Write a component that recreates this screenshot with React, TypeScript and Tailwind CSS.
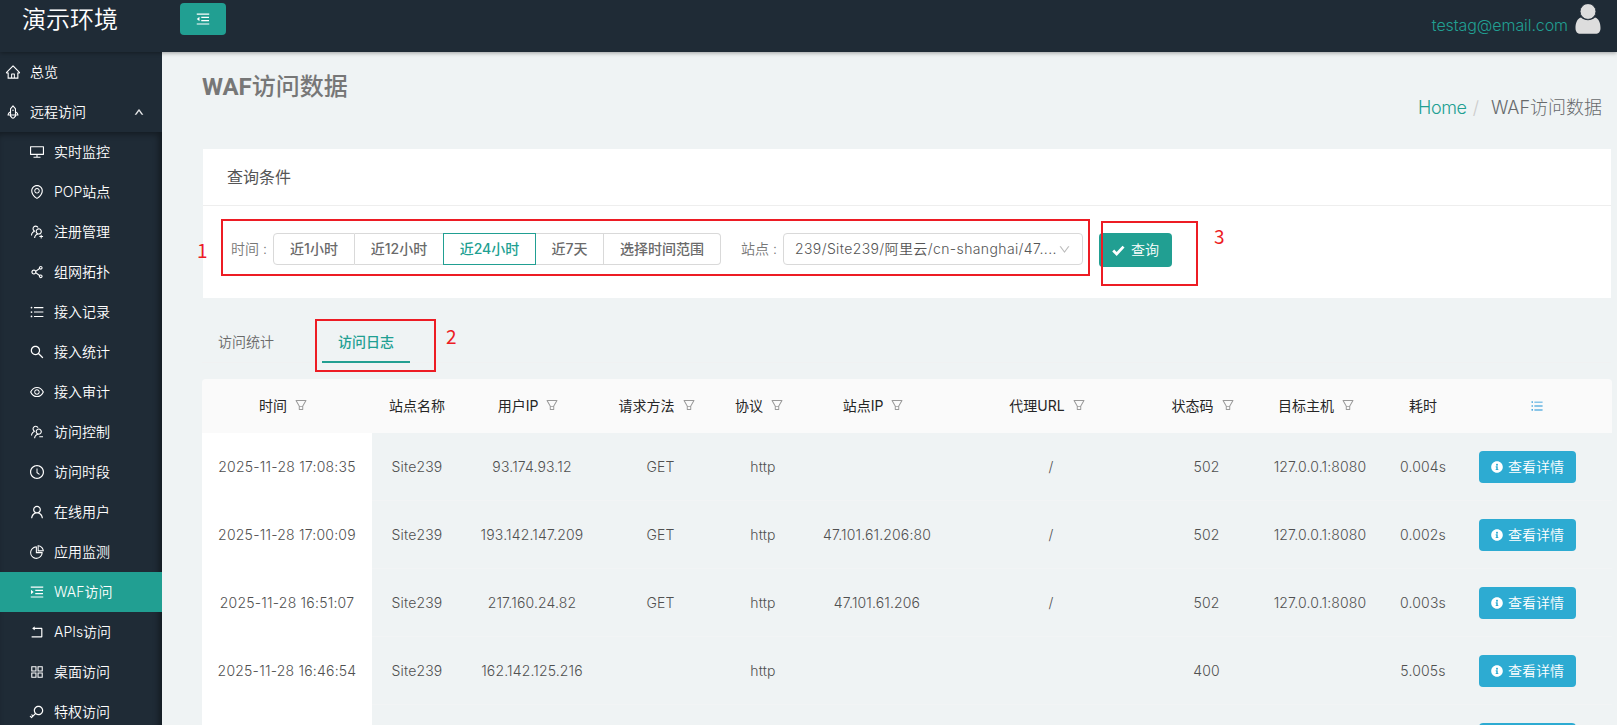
import type { ComponentType, ReactNode } from "react";
import {
  AiOutlineAppstore,
  AiOutlineClockCircle,
  AiOutlineDesktop,
  AiOutlineDown,
  AiOutlineEnvironment,
  AiOutlineEye,
  AiOutlineFilter,
  AiOutlineHome,
  AiOutlineKey,
  AiOutlineMenuFold,
  AiOutlineMenuUnfold,
  AiOutlinePieChart,
  AiOutlineRocket,
  AiOutlineRollback,
  AiOutlineSearch,
  AiOutlineShareAlt,
  AiOutlineUnorderedList,
  AiOutlineUp,
  AiOutlineUser,
  AiOutlineUsergroupAdd,
  AiOutlineUsergroupDelete,
} from "react-icons/ai";
import { FaInfoCircle } from "react-icons/fa";

type Icon = ComponentType<{ className?: string }>;

const submenu: { label: string; icon: Icon; active?: boolean }[] = [
  { label: "实时监控", icon: AiOutlineDesktop },
  { label: "POP站点", icon: AiOutlineEnvironment },
  { label: "注册管理", icon: AiOutlineUsergroupAdd },
  { label: "组网拓扑", icon: AiOutlineShareAlt },
  { label: "接入记录", icon: AiOutlineUnorderedList },
  { label: "接入统计", icon: AiOutlineSearch },
  { label: "接入审计", icon: AiOutlineEye },
  { label: "访问控制", icon: AiOutlineUsergroupDelete },
  { label: "访问时段", icon: AiOutlineClockCircle },
  { label: "在线用户", icon: AiOutlineUser },
  { label: "应用监测", icon: AiOutlinePieChart },
  { label: "WAF访问", icon: AiOutlineMenuUnfold, active: true },
  { label: "APIs访问", icon: AiOutlineRollback },
  { label: "桌面访问", icon: AiOutlineAppstore },
  { label: "特权访问", icon: AiOutlineKey },
];

const headers: { label: string; filter?: boolean }[] = [
  { label: "时间", filter: true },
  { label: "站点名称" },
  { label: "用户IP", filter: true },
  { label: "请求方法", filter: true },
  { label: "协议", filter: true },
  { label: "站点IP", filter: true },
  { label: "代理URL", filter: true },
  { label: "状态码", filter: true },
  { label: "目标主机", filter: true },
  { label: "耗时" },
];

const rows: string[][] = [
  ["2025-11-28 17:08:35", "Site239", "93.174.93.12", "GET", "http", "", "/", "502", "127.0.0.1:8080", "0.004s"],
  ["2025-11-28 17:00:09", "Site239", "193.142.147.209", "GET", "http", "47.101.61.206:80", "/", "502", "127.0.0.1:8080", "0.002s"],
  ["2025-11-28 16:51:07", "Site239", "217.160.24.82", "GET", "http", "47.101.61.206", "/", "502", "127.0.0.1:8080", "0.003s"],
  ["2025-11-28 16:46:54", "Site239", "162.142.125.216", "", "http", "", "", "400", "", "5.005s"],
  ["", "", "", "", "", "", "", "", "", ""],
];

const columns = "grid grid-cols-[170px_90px_140px_117px_88px_140px_208px_103px_124px_82px_148px]";

function Topbar() {
  return (
    <header className="relative z-20 flex h-[52px] shrink-0 bg-[#1f2b36] shadow-[0_1px_4px_rgba(0,0,0,0.35)]">
      <div className="w-[180px] pl-[22px] pt-[2px] text-[24px] leading-9 font-[350] text-white">演示环境</div>
      <button className="mt-[3px] flex h-8 w-[46px] items-center justify-center rounded-sm bg-[#219f92] text-white">
        <AiOutlineMenuFold className="size-4" />
      </button>
      <div className="ml-auto flex pr-[16px]">
        <span className="mt-[12px] mr-[7px] text-[16px] leading-[26px] font-light tracking-[-0.08px] text-[#219f92]">testag@email.com</span>
        <svg viewBox="0 0 26 30" className="mt-1 h-[30px] w-[26px]" fill="#dddddd">
          <path d="M6 13.500C2 14.500 0.500 19.500 0.500 24C0.500 28 2.500 29.800 5.500 29.800H20.500C23.500 29.800 25.500 28 25.500 24C25.500 19.500 24 14.500 20 13.500C16 17 10 17 6 13.500Z" />
          <circle cx="13" cy="7.500" r="7.900" stroke="#1f2b36" strokeWidth="0.800" />
        </svg>
      </div>
    </header>
  );
}

function Sidebar() {
  return (
    <nav className="w-[162px] shrink-0 overflow-hidden bg-[#1f2b36] text-[14px] font-[350] text-white">
      <div className="flex h-10 items-center pb-px pl-[5px]">
        <AiOutlineHome className="mt-px size-4" />
        <span className="ml-[9px]">总览</span>
      </div>
      <div className="flex h-10 items-center pb-px pl-[5px]">
        <AiOutlineRocket className="mt-px size-4" />
        <span className="ml-[9px]">远程访问</span>
        <AiOutlineUp className="mr-[18px] ml-auto size-[10px]" strokeWidth={60} />
      </div>
      <div className="shadow-[inset_-3px_2px_6px_rgba(0,0,0,0.4)]">
        {submenu.map(({ label, icon: ItemIcon, active }) => (
          <div key={label} className={active ? "flex h-10 items-center bg-[#219f92] pb-px pl-[29px]" : "flex h-10 items-center pb-px pl-[29px]"}>
            <ItemIcon className="mt-px size-4" />
            <span className="ml-[9px] whitespace-nowrap">{label}</span>
          </div>
        ))}
      </div>
    </nav>
  );
}

function Segment({ width, children }: { width: string; children: ReactNode }) {
  return <div className={`${width} flex items-center justify-center border-y border-r border-[#d9d9d9] pb-[2px]`}>{children}</div>;
}

function QueryPanel() {
  return (
    <section className="relative h-[149px] w-[1408px] bg-white">
      <h2 className="flex h-[57px] items-center border-b border-[#eeeeee] pl-[24px] text-[16px] text-[#555]">查询条件</h2>
      <div className="flex pt-[27px] pl-[28px] text-[14px]">
        <span className="w-[42px] leading-[31px] font-[350] whitespace-nowrap text-[#777]">时间 :</span>
        <div className="flex h-8 font-medium whitespace-nowrap text-[#6a6a6a]">
          <div className="flex w-[82px] items-center justify-center rounded-l-sm border border-[#d9d9d9] pb-[2px]">近1小时</div>
          <Segment width="w-[89px]">近12小时</Segment>
          <div className="-ml-px flex w-[93px] items-center justify-center border border-[#219f92] pb-[2px] text-[#219f92]">近24小时</div>
          <Segment width="w-[68px]">近7天</Segment>
          <div className="flex w-[117px] items-center justify-center rounded-r-sm border-y border-r border-[#d9d9d9] pb-[2px]">选择时间范围</div>
        </div>
        <span className="ml-[20px] w-[42px] leading-[31px] font-[350] whitespace-nowrap text-[#777]">站点 :</span>
        <div className="flex h-8 w-[300px] items-center rounded-sm border border-[#d9d9d9] pl-[11px] text-[#555]">
          <span className="w-[263px] pb-[2px] font-[350] tracking-[0.38px] whitespace-nowrap">239/Site239/阿里云/cn-shanghai/47....</span>
          <AiOutlineDown className="size-[13px] text-[#bbb]" />
        </div>
        <button className="ml-[16px] flex h-[34px] w-[73px] items-center rounded bg-[#219f92] pl-[13px] text-white">
          <svg viewBox="0 0 14 12" className="h-[11px] w-[13px]" fill="none" stroke="currentColor" strokeWidth="3">
            <path d="M1.200 6L5 9.800L12.500 1.800" />
          </svg>
          <span className="ml-[6px] pb-[2px] text-[14px] font-[350] whitespace-nowrap">查询</span>
        </button>
      </div>
      <div className="absolute top-[70px] left-[18px] h-[57px] w-[869px] border-2 border-[#ed1c24]" />
      <div className="absolute top-[72px] left-[898px] h-[65px] w-[97px] border-2 border-[#ed1c24]" />
      <span className="absolute top-[87px] -left-[6px] font-['Noto_Sans_CJK_SC',sans-serif] text-[19px] leading-7 text-[#ed1c24]">1</span>
      <span className="absolute top-[73px] left-[1011px] font-['Noto_Sans_CJK_SC',sans-serif] text-[19px] leading-7 text-[#ed1c24]">3</span>
    </section>
  );
}

function Tabs() {
  return (
    <div className="relative flex h-[44px] w-[1409px] border-b border-[#f0f1f2] text-[14px] leading-[45px]">
      <span className="w-[88px] pl-4 font-[350] text-[#6a6a6a]">访问统计</span>
      <span className="-mb-px ml-8 h-[44px] w-[88px] border-b-2 border-[#219f92] text-center font-medium text-[#219f92]">访问日志</span>
      <div className="absolute top-0 left-[113px] h-[53px] w-[121px] border-2 border-[#ed1c24]" />
      <span className="absolute top-[3px] left-[244px] font-['Noto_Sans_CJK_SC',sans-serif] text-[19px] leading-7 text-[#ed1c24]">2</span>
    </div>
  );
}

function LogTable() {
  return (
    <section className="w-[1410px] overflow-hidden rounded-t text-[14px]">
      <div className={`${columns} h-[54px] bg-[#fafafa] text-[#262626]`}>
        {headers.map(({ label, filter }) => (
          <div key={label} className={filter ? "flex items-center justify-center pr-[7px] pb-[2px] whitespace-nowrap" : "flex items-center justify-center pb-[2px] whitespace-nowrap"}>
            {label}
            {filter && <AiOutlineFilter className="ml-[7px] size-[14px] text-[#999]" />}
          </div>
        ))}
        <div className="flex items-center justify-center pr-[2px]">
          <AiOutlineUnorderedList className="size-[14px] text-[#1890d5]" />
        </div>
      </div>
      {rows.map((row, r) => (
        <div key={r} className={`${columns} h-[68px]`}>
          {row.map((cell, c) => (
            <div
              key={c}
              className={
                c === 0
                  ? "flex items-center justify-center bg-white pb-px font-[350] tracking-[0.22px] whitespace-nowrap text-[#505050]"
                  : "flex items-center justify-center border-b border-[#f2f4f5] font-[350] tracking-[0.15px] whitespace-nowrap text-[#505050]"
              }
            >
              {cell}
            </div>
          ))}
          <div className="flex items-center border-b border-[#f2f4f5] pl-[15px]">
            <button className="flex h-8 w-[97px] items-center rounded bg-[#2dabd2] pl-3 text-white">
              <FaInfoCircle className="size-3" />
              <span className="ml-[5px] font-[350] whitespace-nowrap">查看详情</span>
            </button>
          </div>
        </div>
      ))}
    </section>
  );
}

export default function App() {
  return (
    <div className="flex h-[725px] w-[1617px] flex-col overflow-hidden bg-[#eff3f4] font-['Inter','Noto_Sans_CJK_SC',sans-serif]">
      <Topbar />
      <div className="flex min-h-0 flex-1">
        <Sidebar />
        <main className="min-w-0 flex-1 overflow-hidden pl-10">
          <div className="flex h-[97px] justify-between pr-[15px]">
            <h1 className="pt-[17px] font-['Roboto','Noto_Sans_CJK_SC',sans-serif] text-[24px] leading-9 font-bold text-[#777]">
              WAF<span className="font-medium">访问数据</span>
            </h1>
            <div className="flex pt-[42px] text-[18px] leading-7 font-light text-[#676a6c]">
              <span className="tracking-[-0.4px] text-[#219f92]">Home</span>
              <span className="px-[6px] text-[#ccc]">/</span>
              <span className="ml-[6px]">WAF访问数据</span>
            </div>
          </div>
          <div className="pl-px">
            <QueryPanel />
          </div>
          <div className="pt-[21px]">
            <Tabs />
          </div>
          <div className="pt-[16px]">
            <LogTable />
          </div>
        </main>
      </div>
    </div>
  );
}
